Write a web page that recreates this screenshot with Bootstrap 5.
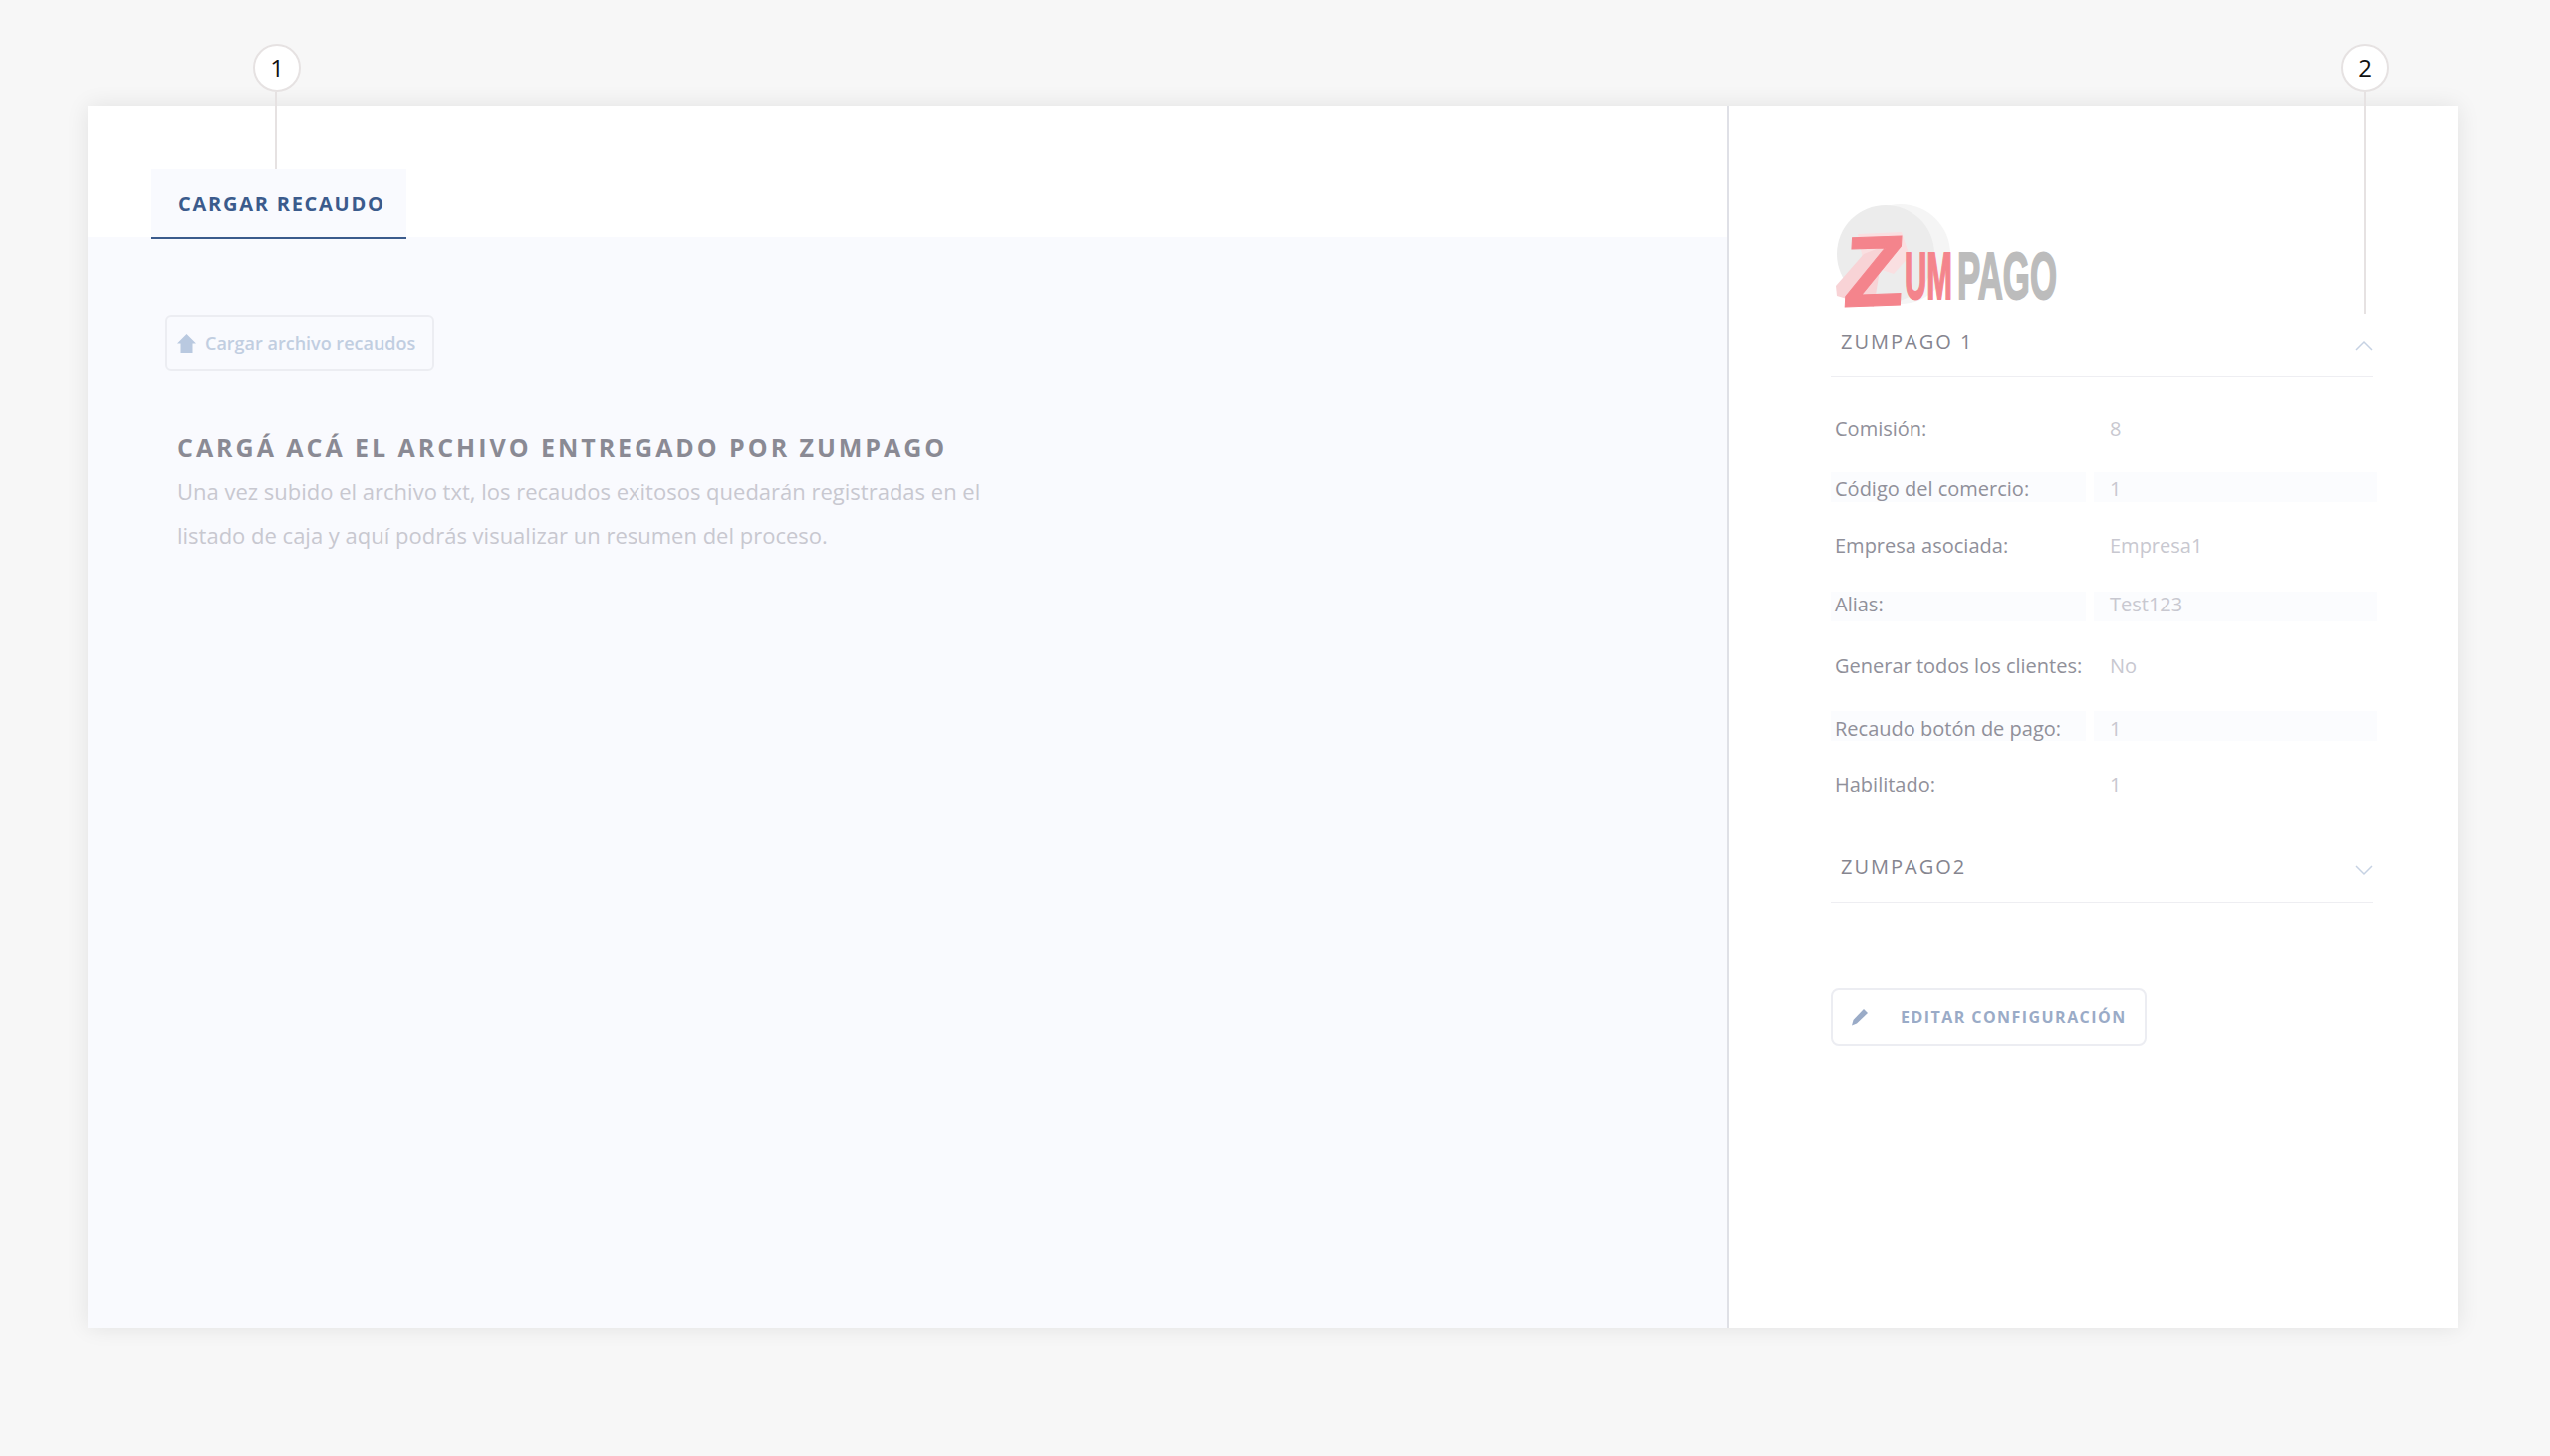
<!DOCTYPE html>
<html lang="es">
<head>
    <meta charset="UTF-8">
    <meta name="viewport" content="width=device-width, initial-scale=1.0">
    <title>Cargar recaudo</title>
    <!-- Bootstrap CSS -->
    <link href="https://cdn.jsdelivr.net/npm/bootstrap@5.3.0/dist/css/bootstrap.min.css" rel="stylesheet">
    <style>
        body { background: #f7f7f7; font-family: "Open Sans", sans-serif; min-height: 1462px; }
        .lienzo { padding: 106px 92px 0 88px; position: relative; }
        .hoja { height: 1227px; background: #fff; box-shadow: 0 0 22px rgba(0,0,0,.09); }
        .panel-izq { width: 1648px; flex: none; border-right: 2px solid #dfe0e6; }
        .franja-tabs { height: 132px; padding: 64px 0 0 64px; }
        .tab-recaudo { position: relative; width: 256px; height: 70px; background: #f9fafe; border-bottom: 2px solid #3b5b8c; color: #3b5b8c; font-size: 20px; font-weight: 700; letter-spacing: 1.75px; padding-left: 27px; line-height: 70px; }
        .cuerpo-izq { background: #f9fafe; padding: 78px 0 0 78px; }
        .btn-cargar { width: 270px; height: 57px; border: 2px solid #ecedf2; border-radius: 6px; color: #c1cee1; font-size: 18px; font-weight: 600; padding: 0 0 0 10px; gap: 9px; }
        .btn-cargar:hover { color: #c1cee1; border-color: #ecedf2; }
        .titulo-carga { margin: 59px 0 0 12px; font-size: 25px; font-weight: 700; letter-spacing: 2.96px; color: #8a8a94; line-height: 34px; }
        .texto-carga { margin: 5px 0 0 12px; font-size: 22px; line-height: 44px; color: #c8c8d0; width: 840px; }
        .panel-der { padding: 99px 82px 0 102px; }
        .logo-zum { display: block; margin: 0 0 -24px 5px; }
        .logo-zum text { font-family: "Liberation Sans", sans-serif; font-weight: 700; }
        .acordeon-cab { border-bottom: 1px solid #eeeef2; color: #85858f; font-size: 20px; font-weight: 500; letter-spacing: 2px; padding: 0 0 2px 10px; margin-right: 4px; height: 70px; }
        .acordeon-cab svg { margin-top: 8px; }
        .filas-datos { margin-top: 35px; }
        .fila-dato { font-size: 20px; gap: 8px; height: 60px; }
        .fila-dato > div { height: 30px; line-height: 30px; }
        .fila-dato > div:first-child { width: 256px; color: #90909a; padding-left: 4px; white-space: nowrap; }
        .fila-dato > div:last-child { width: 284px; color: #c8c8d0; padding-left: 16px; }
        .fila-par > div { background: #fbfcfe; }
        /* el texto de cada fila no cae parejo en el original */
        .fila-dato:nth-child(1) > div { line-height: 34px; }
        .fila-dato:nth-child(2) > div { line-height: 34px; }
        .fila-dato:nth-child(3) > div { line-height: 28px; }
        .fila-dato:nth-child(4) > div { line-height: 26px; }
        .fila-dato:nth-child(6) > div { line-height: 36px; }
        .fila-dato:nth-child(7) > div { line-height: 28px; }
        .zona-zumpago2 { margin-top: 3px; }
        .btn-editar { width: 317px; height: 58px; margin-top: 85px; border: 2px solid #ecedf2; border-radius: 8px; color: #9aabc7; font-size: 16px; font-weight: 700; letter-spacing: 1.45px; padding: 0 0 0 18px; gap: 32px; background: #fff; }
        .btn-editar:hover { color: #9aabc7; border-color: #ecedf2; }
        .marca-num { position: absolute; top: 44px; width: 48px; height: 48px; border: 2px solid #e6e2e2; border-radius: 50%; background: #fff; color: #111; font-size: 24px; }
        .marca-linea { position: absolute; top: 92px; width: 2px; background: #e6e2e2; }
    </style>
</head>
<body>
    <div class="lienzo">
        <div class="hoja d-flex">
            <div class="panel-izq d-flex flex-column">
                <div class="franja-tabs">
                    <div class="tab-recaudo">CARGAR RECAUDO</div>
                </div>
                <div class="cuerpo-izq flex-grow-1">
                    <button type="button" class="btn btn-cargar d-flex align-items-center">
                        <svg width="19" height="19" viewBox="0 0 19 19"><path fill="#b9c9e0" d="M9.500 0 19 9.500H15.500V19H3.500V9.500H0Z"/></svg>
                        Cargar archivo recaudos
                    </button>
                    <h2 class="titulo-carga">CARGÁ ACÁ EL ARCHIVO ENTREGADO POR ZUMPAGO</h2>
                    <p class="texto-carga">Una vez subido el archivo txt, los recaudos exitosos quedarán registradas en el listado de caja y aquí podrás visualizar un resumen del proceso.</p>
                </div>
            </div>
            <div class="panel-der flex-grow-1">
                <svg class="logo-zum" width="236" height="128" viewBox="0 0 236 128">
                    <circle cx="65" cy="50" r="50" fill="#f5f5f5"/>
                    <circle cx="50" cy="50" r="49" fill="#ececec"/>
                    <polygon fill="#fadfe1" points="22,30 66,28 74,52 58,70 28,60"/>
                    <polygon fill="#f8d3d6" points="0,82 28,50 48,42 38,103 1,92"/>
                    <text x="14" y="102" font-size="100" fill="#f4848c" stroke="#f4848c" stroke-width="1" transform="rotate(-2 38 66) skewX(-5)">Z</text>
                    <text x="69" y="95" font-size="66" fill="#f4848c" stroke="#f4848c" stroke-width="2" textLength="48" lengthAdjust="spacingAndGlyphs">UM</text>
                    <text x="122" y="95" font-size="66" fill="#bcbcbc" stroke="#bcbcbc" stroke-width="2" textLength="100" lengthAdjust="spacingAndGlyphs">PAGO</text>
                </svg>
                <div class="acordeon-cab d-flex justify-content-between align-items-center">
                    <span>ZUMPAGO 1</span>
                    <svg width="18" height="11" viewBox="0 0 18 11"><path fill="none" stroke="#c6d2e3" stroke-width="1.500" d="M1 10 9 2 17 10"/></svg>
                </div>
                <div class="filas-datos d-flex flex-column">
                    <div class="fila-dato d-flex"><div>Comisión:</div><div>8</div></div>
                    <div class="fila-dato fila-par d-flex"><div>Código del comercio:</div><div>1</div></div>
                    <div class="fila-dato d-flex"><div>Empresa asociada:</div><div>Empresa1</div></div>
                    <div class="fila-dato fila-par d-flex"><div>Alias:</div><div>Test123</div></div>
                    <div class="fila-dato d-flex"><div>Generar todos los clientes:</div><div>No</div></div>
                    <div class="fila-dato fila-par d-flex"><div>Recaudo botón de pago:</div><div>1</div></div>
                    <div class="fila-dato d-flex"><div>Habilitado:</div><div>1</div></div>
                </div>
                <div class="acordeon-cab zona-zumpago2 d-flex justify-content-between align-items-center">
                    <span>ZUMPAGO2</span>
                    <svg width="18" height="11" viewBox="0 0 18 11"><path fill="none" stroke="#c6d2e3" stroke-width="1.500" d="M1 1 9 9 17 1"/></svg>
                </div>
                <button type="button" class="btn btn-editar d-flex align-items-center text-nowrap">
                    <svg width="18" height="18" viewBox="0 0 18 18"><path fill="#9aabc7" d="M13 1 17 5 6 15.500 1 17.500 2.500 12Z"/></svg>
                    EDITAR CONFIGURACIÓN
                </button>
            </div>
        </div>
        <div class="marca-num d-flex align-items-center justify-content-center" style="left: 254px">1</div>
        <div class="marca-linea" style="left: 276px; height: 78px"></div>
        <div class="marca-num d-flex align-items-center justify-content-center" style="left: 2350px">2</div>
        <div class="marca-linea" style="left: 2373px; height: 223px"></div>
    </div>
    <!-- Bootstrap JS Bundle with Popper -->
    <script src="https://cdn.jsdelivr.net/npm/bootstrap@5.3.0/dist/js/bootstrap.bundle.min.js"></script>
</body>
</html>
